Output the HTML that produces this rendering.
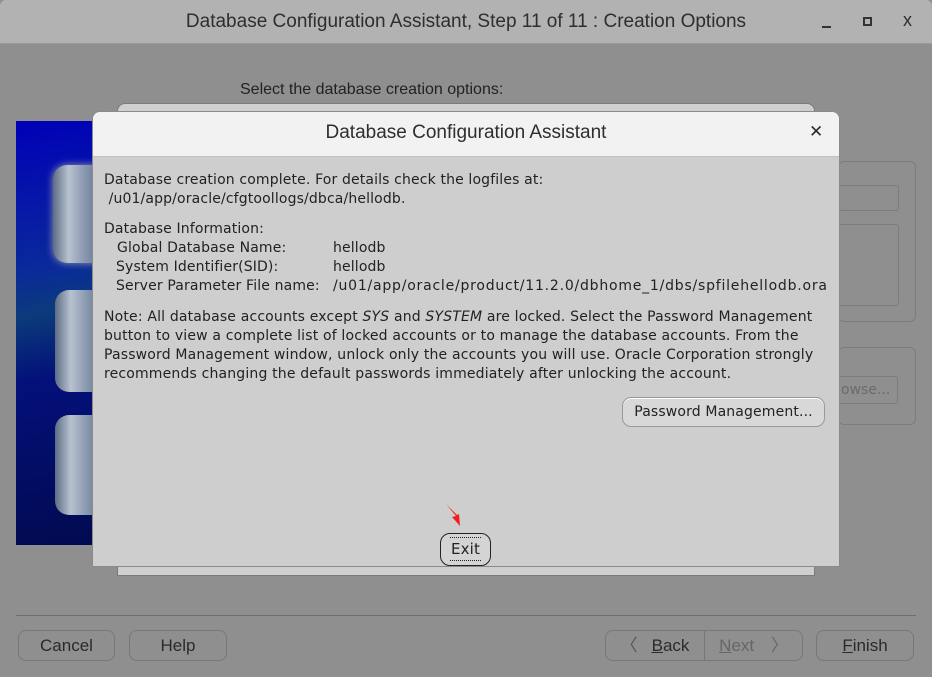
<!DOCTYPE html>
<html><head><meta charset="utf-8"><style>
*{margin:0;padding:0;box-sizing:border-box}
body{width:932px;height:677px;background:#8f8f8f;position:relative;overflow:hidden;font-family:"DejaVu Sans",sans-serif;}
.a{position:absolute}
.tb{left:0;top:0;width:932px;height:44px;background:#b2b2b2;border-bottom:1px solid #9a9a9a;border-radius:6px 6px 0 0}
.ttl{font-family:"Liberation Sans Narrow","Liberation Sans",sans-serif;font-size:19px;color:#2e2e2e;}
.btn{border:1px solid #777;border-radius:8px;font-family:"Liberation Sans Narrow","Liberation Sans",sans-serif;font-size:17px;color:#2a2a2a;text-align:center;line-height:29px;height:31px;top:630px}
.t{font-size:14px;color:#222;line-height:19px;white-space:pre;letter-spacing:0.14px}
.cyl{background:linear-gradient(90deg,#5c6c84,#b8c2d0 35%,#8898b0 70%,#6a7a94);border-radius:14px 0 0 14px}
</style></head><body>
<div class="a tb"></div>
<div class="a ttl" style="left:0;width:932px;text-align:center;top:11px;">Database Configuration Assistant, Step 11 of 11 : Creation Options</div>
<div class="a" style="left:822px;top:26px;width:9px;height:2px;background:#333"></div>
<div class="a" style="left:863px;top:17px;width:9px;height:9px;border:2px solid #333"></div>
<div class="a ttl" style="left:903px;top:10px;font-size:18px;">x</div>
<div class="a ttl" style="left:240px;top:81px;font-size:16px;color:#222">Select the database creation options:</div>
<div class="a" style="left:16px;top:121px;width:80px;height:424px;background:linear-gradient(170deg,#0000b8 0%,#0a2a9a 35%,#0b3b7a 45%,#03107a 60%,#020a50 100%)"></div>
<div class="a cyl" style="left:53px;top:165px;width:45px;height:98px;box-shadow:0 0 8px #99a"></div>
<div class="a cyl" style="left:55px;top:290px;width:45px;height:102px"></div>
<div class="a cyl" style="left:55px;top:415px;width:45px;height:100px"></div>
<div class="a" style="left:838px;top:161px;width:78px;height:161px;border:1px solid #7c7c7c;border-radius:6px"></div>
<div class="a" style="left:838px;top:185px;width:61px;height:26px;border:1px solid #7c7c7c;border-radius:3px"></div>
<div class="a" style="left:838px;top:224px;width:61px;height:82px;border:1px solid #7c7c7c;border-radius:3px"></div>
<div class="a" style="left:838px;top:347px;width:78px;height:78px;border:1px solid #7c7c7c;border-radius:6px"></div>
<div class="a" style="left:838px;top:376px;width:60px;height:28px;border:1px solid #7c7c7c;border-radius:3px;font-size:14px;color:#6a6a6a;line-height:26px;padding-left:2px">owse...</div>
<div class="a" style="left:117px;top:103px;width:698px;height:473px;background:#cfcfcf;border:1px solid #7a7a7a;border-radius:8px 8px 0 0"></div>
<div class="a" style="left:92px;top:111px;width:748px;height:456px;background:#cecece;border:1px solid #8a8a8a;border-radius:8px 8px 0 0;overflow:hidden">
 <div style="height:45px;background:#f2f2f2;border-bottom:1px solid #c0c0c0"></div>
</div>
<div class="a ttl" style="left:92px;width:748px;text-align:center;top:122px;font-size:19px">Database Configuration Assistant</div>
<div class="a" style="left:809px;top:122px;font-size:17px;font-weight:bold;color:#2a2a2a">✕</div>
<div class="a t" style="left:104px;top:171px">Database creation complete. For details check the logfiles at:
 /u01/app/oracle/cfgtoollogs/dbca/hellodb.</div>
<div class="a t" style="left:104px;top:220px">Database Information:</div>
<div class="a t" style="left:117px;top:239px">Global Database Name:</div>
<div class="a t" style="left:116px;top:258px">System Identifier(SID):</div>
<div class="a t" style="left:116px;top:277px">Server Parameter File name:</div>
<div class="a t" style="left:333px;top:239px">hellodb
hellodb
<span style="letter-spacing:0.78px">/u01/app/oracle/product/11.2.0/dbhome_1/dbs/spfilehellodb.ora</span></div>
<div class="a t" style="left:104px;top:308px;letter-spacing:0.17px">Note: All database accounts except <i>SYS</i> and <i>SYSTEM</i> are locked. Select the Password Management
button to view a complete list of locked accounts or to manage the database accounts. From the
Password Management window, unlock only the accounts you will use. Oracle Corporation strongly
recommends changing the default passwords immediately after unlocking the account.</div>
<div class="a t" style="left:622px;top:397px;width:203px;height:30px;border:1px solid #999;border-radius:9px;background:#d8d8d8;box-shadow:inset 0 1px 0 #fff;line-height:28px;text-align:center">Password Management...</div>
<div class="a t" style="left:440px;top:533px;width:51px;height:33px;border:1.5px solid #222;border-radius:10px;background:#d4d4d4;line-height:31px;text-align:center;font-size:15px"><span style="border-top:1px dotted #222;border-bottom:1px dotted #222;padding:2px 1px">Exit</span></div>
<svg class="a" style="left:444px;top:503px" width="20" height="24"><path d="M2 1 L12 13 L8 14 L16 23 L15 11 L13 12 Z" fill="#f21e1e"/></svg>
<div class="a" style="left:16px;top:615px;width:900px;height:1px;background:#6e6e6e"></div>
<div class="a btn" style="left:18px;width:97px">Cancel</div>
<div class="a btn" style="left:129px;width:98px">Help</div>
<div class="a btn" style="left:605px;width:100px;border-radius:8px 0 0 8px"><span style="margin-right:14px;color:#555">〈</span><u>B</u>ack</div>
<div class="a btn" style="left:704px;width:99px;border-radius:0 8px 8px 0;color:#666"><u>N</u>ext <span style="margin-left:12px">〉</span></div>
<div class="a btn" style="left:816px;width:98px"><u>F</u>inish</div>
</body></html>
